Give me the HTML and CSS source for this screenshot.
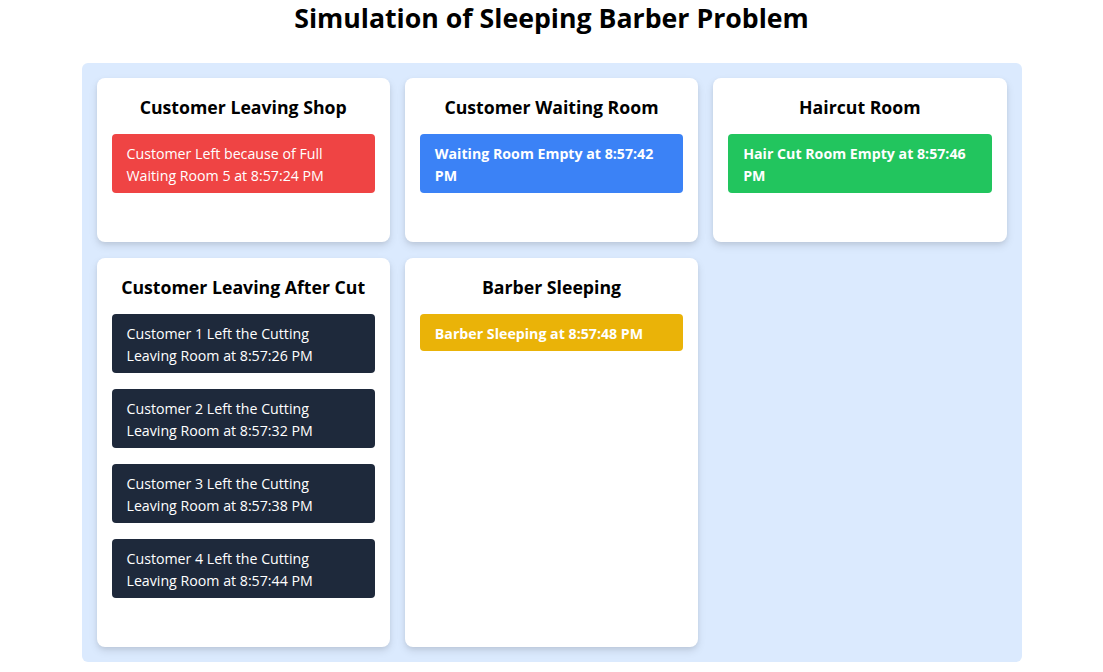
FILE: index.html
```html
<!DOCTYPE html>
<html lang="en">
<head>
<meta charset="utf-8">
<title>Sleeping Barber</title>
<link rel="stylesheet" href="styles.css">
</head>
<body>
<h1 class="page-title">Simulation of Sleeping Barber Problem</h1>
<main class="board">
  <section class="card">
    <h2 class="card-title">Customer Leaving Shop</h2>
    <div class="msg msg-red">Customer Left because of Full Waiting Room 5 at 8:57:24 PM</div>
  </section>
  <section class="card">
    <h2 class="card-title">Customer Waiting Room</h2>
    <div class="msg msg-blue">Waiting Room Empty at 8:57:42 PM</div>
  </section>
  <section class="card">
    <h2 class="card-title">Haircut Room</h2>
    <div class="msg msg-green">Hair Cut Room Empty at 8:57:46 PM</div>
  </section>
  <section class="card">
    <h2 class="card-title">Customer Leaving After Cut</h2>
    <div class="msg msg-dark">Customer 1 Left the Cutting Leaving Room at 8:57:26 PM</div>
    <div class="msg msg-dark">Customer 2 Left the Cutting Leaving Room at 8:57:32 PM</div>
    <div class="msg msg-dark">Customer 3 Left the Cutting Leaving Room at 8:57:38 PM</div>
    <div class="msg msg-dark">Customer 4 Left the Cutting Leaving Room at 8:57:44 PM</div>
  </section>
  <section class="card">
    <h2 class="card-title">Barber Sleeping</h2>
    <div class="msg msg-yellow">Barber Sleeping at 8:57:48 PM</div>
  </section>
</main>
</body>
</html>
```
FILE: styles.css
```css
* { box-sizing: border-box; }
body {
  margin: 0;
  background: #ffffff;
  font-family: "Open Sans", "Noto Sans", sans-serif;
  color: #000;
}
.page-title {
  margin: 0;
  padding-top: 0;
  height: 63px;
  text-align: center;
  font-size: 26.7px;
  line-height: 36px;
  font-weight: 700;
}
.board {
  width: 940px;
  margin: 0 auto;
  background: #dbeafe;
  border-radius: 6px;
  padding: 15px;
  display: grid;
  grid-template-columns: repeat(3, 1fr);
  gap: 16px 15px;
}
.card {
  background: #fff;
  border-radius: 8px;
  box-shadow: 0 4px 8px rgba(0, 0, 0, 0.1), 0 2px 4px rgba(0, 0, 0, 0.06);
  padding: 15px 15px 33px;
}
.card-title {
  margin: 0 0 13px;
  text-align: center;
  font-size: 17.7px;
  line-height: 28px;
  font-weight: 700;
}
.msg {
  border-radius: 4px;
  padding: 9px 15px 6px;
  font-size: 14.2px;
  line-height: 22px;
  color: #fff;
  margin-bottom: 16px;
}
.msg-red { background: #ef4444; }
.msg-blue { background: #3b82f6; font-weight: 700; }
.msg-green { background: #22c55e; font-weight: 700; }
.msg-yellow { background: #eab308; font-weight: 700; padding: 9px 15px 6px; }
.msg-dark { background: #1e293b; }
```
